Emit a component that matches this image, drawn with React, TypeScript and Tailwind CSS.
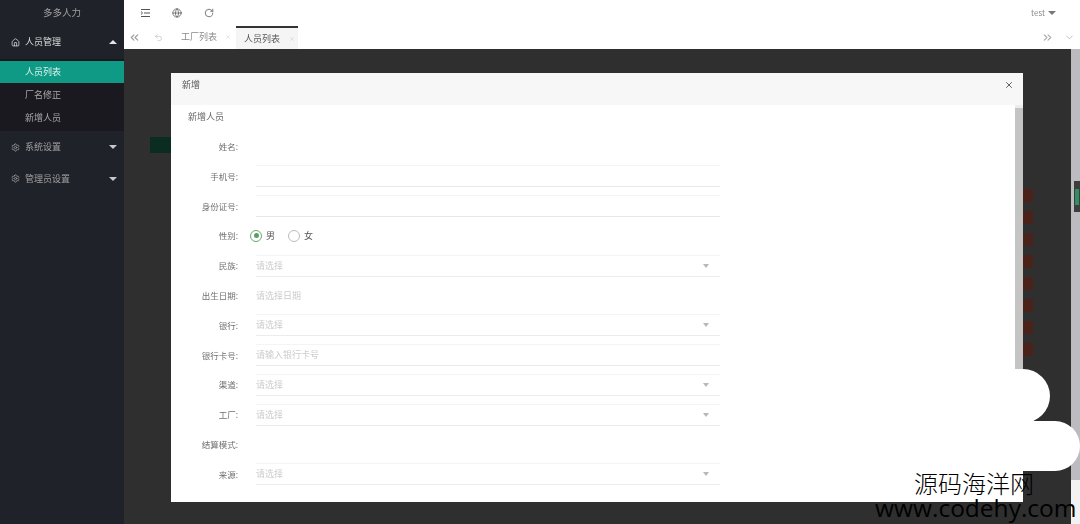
import { Home, Settings, ChevronsLeft, ChevronsRight, ChevronDown, RotateCw, Undo2, X, Globe } from "lucide-react";

const font = "[font-family:'Noto_Sans_CJK_SC','Liberation_Sans',sans-serif]";

function Caret({ up }: { up?: boolean }) {
  return up ? (
    <span className="w-0 h-0 border-x-[4px] border-x-transparent border-b-[4px] border-b-[#e5e5e5]" />
  ) : (
    <span className="w-0 h-0 border-x-[4px] border-x-transparent border-t-[4px] border-t-[#c8c8c8]" />
  );
}

function MenuLines() {
  return (
    <svg width="11" height="10" viewBox="0 0 11 10" fill="none" stroke="#555" strokeWidth="1">
      <path d="M1 1.5h9M4 5h6M1 8.5h9M1 3.5l1.6 1.5L1 6.5" />
    </svg>
  );
}

function Sidebar() {
  return (
    <aside className="w-[124px] shrink-0 h-full bg-[#20222a] flex flex-col text-[9px] blur-[0.4px]">
      <div className="h-[25px] flex items-center justify-center text-[#a0a0a0] text-[9.5px]">多多人力</div>
      <div className="h-[34px] flex items-center pl-[11px] pr-[7px] text-[#dcdcdc]">
        <Home size={9} className="mr-[5px]" />
        <span className="flex-1">人员管理</span>
        <Caret up />
      </div>
      <div className="h-[2px] bg-[#17181d]" />
      <div className="bg-[#1b1920] flex flex-col pb-[2px]">
        <div className="h-[22px] flex items-center pl-[25px] bg-[#0f9a85] text-[#dff2ee]">人员列表</div>
        <div className="h-[23px] flex items-center pl-[25px] text-[#a8a8a8]">厂名修正</div>
        <div className="h-[23px] flex items-center pl-[25px] text-[#a8a8a8]">新增人员</div>
      </div>
      <div className="h-[32px] flex items-center pl-[11px] pr-[7px] text-[#a0a0a0]">
        <Settings size={9} className="mr-[5px]" />
        <span className="flex-1">系统设置</span>
        <Caret />
      </div>
      <div className="h-[31px] flex items-center pl-[11px] pr-[7px] text-[#a0a0a0]">
        <Settings size={9} className="mr-[5px]" />
        <span className="flex-1">管理员设置</span>
        <Caret />
      </div>
    </aside>
  );
}

function TopBar() {
  return (
    <div className="h-[25px] bg-white shrink-0 flex items-center pl-[16px] pr-[24px] text-[#666] blur-[0.4px]">
      <MenuLines />
      <Globe size={10} className="ml-[21px]" />
      <RotateCw size={10} className="ml-[22px]" />
      <span className="ml-auto text-[8px] text-[#888] mr-[3px]">test</span>
      <span className="w-0 h-0 border-x-[4px] border-x-transparent border-t-[4px] border-t-[#777]" />
    </div>
  );
}

function Tabs() {
  return (
    <div className="h-[24px] bg-white flex items-stretch text-[9px] text-[#8a8a8a] blur-[0.4px] shrink-0">
      <div className="w-[21px] flex items-center justify-center">
        <ChevronsLeft size={13} className="text-[#9a9a9a]" />
      </div>
      <div className="w-[26px] flex items-center justify-center">
        <Undo2 size={9} className="text-[#c4c4c4]" />
      </div>
      <div className="w-[65px] flex items-center pl-[10px]">
        工厂列表<X size={6} className="ml-[8px] text-[#ccc]" />
      </div>
      <div className="w-[62px] mt-[1px] flex items-center pl-[8px] bg-[#f5f5f5] border-t-2 border-[#333] text-[#555]">
        人员列表<X size={6} className="ml-[9px] text-[#ccc]" />
      </div>
      <div className="ml-auto w-[22px] flex items-center justify-center">
        <ChevronsRight size={13} className="text-[#aaa]" />
      </div>
      <div className="w-[22px] flex items-center justify-center">
        <ChevronDown size={11} className="text-[#bbb]" />
      </div>
    </div>
  );
}

type Row = { label: string; kind: "radio" | "select" | "input" | "plain" | "line" | "none"; ph?: string };

const rows: Row[] = [
  { label: "姓名:", kind: "none" },
  { label: "手机号:", kind: "line" },
  { label: "身份证号:", kind: "line" },
  { label: "性别:", kind: "radio" },
  { label: "民族:", kind: "select", ph: "请选择" },
  { label: "出生日期:", kind: "plain", ph: "请选择日期" },
  { label: "银行:", kind: "select", ph: "请选择" },
  { label: "银行卡号:", kind: "input", ph: "请输入银行卡号" },
  { label: "渠道:", kind: "select", ph: "请选择" },
  { label: "工厂:", kind: "select", ph: "请选择" },
  { label: "结算模式:", kind: "none" },
  { label: "来源:", kind: "select", ph: "请选择" },
];

function Field({ row }: { row: Row }) {
  return (
    <div className="h-[29.8px] flex items-center shrink-0">
      <div className="w-[50px] text-right text-[8.5px] text-[#707070]">{row.label}</div>
      {row.kind === "radio" && (
        <div className="flex items-center ml-[12px] text-[#555]">
          <span className="w-[12px] h-[12px] rounded-full border border-[#6aa86f] flex items-center justify-center">
            <span className="w-[5px] h-[5px] rounded-full bg-[#5e9e66]" />
          </span>
          <span className="ml-[4px]">男</span>
          <span className="w-[12px] h-[12px] rounded-full border border-[#bbb] ml-[13px]" />
          <span className="ml-[4px]">女</span>
        </div>
      )}
      {row.kind === "line" && <div className="ml-[18px] w-[464px] h-[22px] border-y border-t-[#f4f4f4] border-b-[#e8e8e8]" />}
      {row.kind === "plain" && <div className="ml-[18px] text-[#cccccc]">{row.ph}</div>}
      {(row.kind === "select" || row.kind === "input") && (
        <div className="ml-[18px] w-[464px] h-[22px] border-y border-t-[#f4f4f4] border-b-[#ececec] flex items-center pr-[11px] text-[#cccccc]">
          <span className="flex-1">{row.ph}</span>
          {row.kind === "select" && (
            <span className="w-0 h-0 border-x-[3px] border-x-transparent border-t-[4px] border-t-[#b8b8b8]" />
          )}
        </div>
      )}
    </div>
  );
}

function Modal() {
  return (
    <div className="absolute left-[171px] top-[73px] w-[852px] h-[429px] bg-white flex flex-col text-[9px] overflow-hidden">
      <div className="h-[32px] shrink-0 bg-[#f7f7f8] flex items-start pt-[5px] pl-[11px] pr-[9px] text-[#555] blur-[0.4px]">
        <span className="flex-1">新增</span>
        <X size={10} className="text-[#444] mt-[2px]" />
      </div>
      <div className="flex-1 flex min-h-0">
        <div className="flex-1 overflow-hidden pl-[17px] blur-[0.4px]">
          <div className="h-[24px] flex items-center text-[#666]">新增人员</div>
          <div className="flex flex-col pt-[2.5px]">
            {rows.map((r) => (
              <Field key={r.label} row={r} />
            ))}
          </div>
        </div>
        <div className="w-[8px] shrink-0 flex flex-col">
          <div className="h-[366px] bg-[#c4c4c4] border-t-[3px] border-[#ececec]" />
        </div>
      </div>
    </div>
  );
}

function Backdrop() {
  return (
    <main className="flex-1 min-h-0 bg-[#2f2f30] flex">
      <div className="flex-1 relative overflow-hidden">
        <div className="absolute left-[26px] top-[88px] w-[21px] h-[16px] bg-[#0b2c20]" />
        <div className="absolute right-[38px] top-[140px] w-[10px] h-[210px] flex flex-col gap-[9px]">
          {[0, 1, 2, 3, 4, 5, 6, 7].map((i) => (
            <div key={i} className="h-[13px] bg-[#4a2219]" />
          ))}
        </div>
      </div>
      <div className="w-[9px] shrink-0 bg-[#bcbcc0] flex flex-col">
        <div className="h-[132px]" />
        <div className="h-[31px] w-[6px] ml-auto bg-[#3d3d3d] flex items-center justify-center">
          <div className="w-[4px] h-[16px] bg-[#2f8f60]" />
        </div>
        <div className="h-[268px]" />
        <div className="flex-1 bg-[#f2f2f2]" />
      </div>
    </main>
  );
}

export default function App() {
  return (
    <div className={`relative w-[1080px] h-[524px] overflow-hidden flex ${font}`}>
      <Sidebar />
      <div className="flex-1 flex flex-col min-w-0">
        <TopBar />
        <Tabs />
        <Backdrop />
      </div>
      <Modal />
      <div className="absolute left-[900px] top-[369px] w-[150px] h-[54px] rounded-r-[27px] bg-white" />
      <div className="absolute left-[860px] top-[421px] w-[220px] h-[50px] rounded-r-[25px] bg-white" />
      <div className="absolute left-[875px] top-[470px] w-[205px] text-black">
        <div className="text-[24px] leading-[26px] pl-[39px] font-light">源码海洋网</div>
        <div className="text-[24.5px] leading-[24px] [font-family:'Open_Sans',sans-serif] whitespace-nowrap">www.codehy.com</div>
      </div>
    </div>
  );
}
